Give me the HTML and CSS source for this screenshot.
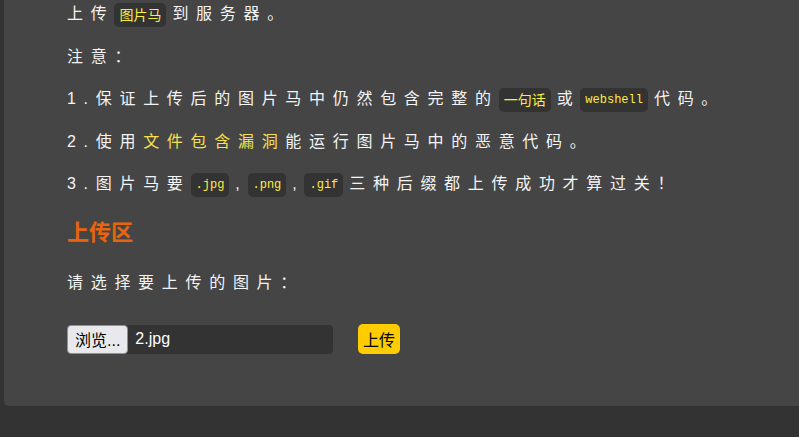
FILE: index.html
```html
<!DOCTYPE html>
<html lang="zh-CN">
  <head>
    <meta charset="UTF-8" />
    <meta name="viewport" content="width=device-width, initial-scale=1.0" />
    <title>Pass-14</title>
    <link rel="stylesheet" href="styles.css">
  </head>
  <body>
    <div class="panel">
      <p>上传<code class="cn">图片马</code>到服务器。</p>
      <p>注意：</p>
      <p>1.保证上传后的图片马中仍然包含完整的<code class="cn">一句话</code>或<code>webshell</code>代码。</p>
      <p>2.使用<span class="hl">文件包含漏洞</span>能运行图片马中的恶意代码。</p>
      <p>3.图片马要<code>.jpg</code>,<code>.png</code>,<code>.gif</code>三种后缀都上传成功才算过关！</p>

      <h2 class="section-title">上传区</h2>
      <p>请选择要上传的图片：</p>

      <form class="upload-form" onsubmit="return false">
        <label class="file-field">
          <span class="file-btn">浏览...</span>
          <span class="file-name">2.jpg</span>
        </label>
        <button class="upload-btn" type="submit">上传</button>
      </form>
    </div>
  </body>
</html>
```

FILE: styles.css
```css
* {
  box-sizing: border-box;
}
html,
body {
  overflow: hidden;
}
body {
  margin: 0;
  height: 437px;
  background-color: #333333;
  font-family: "Liberation Sans", "Noto Sans CJK SC", sans-serif;
  font-size: 16px;
  color: #f4f4f4;
}
.panel {
  margin-left: 4px;
  padding: 1px 0 52px 63px;
  background-color: #454545;
  border-bottom-left-radius: 5px;
}
.panel p {
  margin: 16px 0;
  height: 26.5px;
  line-height: 26.5px;
  letter-spacing: 7.7px;
}
.panel p:first-child {
  margin-top: 0;
}
code {
  display: inline-block;
  vertical-align: top;
  margin: 2px 6px 0 0;
  padding: 0 5px;
  line-height: 24px;
  font-family: "Liberation Mono", monospace;
  font-size: 12px;
  letter-spacing: 0;
  color: #ffec40;
  background-color: #333333;
  border-radius: 5px;
}
code.cn {
  font-family: "Noto Sans CJK SC", sans-serif;
  font-size: 14px;
  line-height: 22px;
  padding-bottom: 2px;
}
.hl {
  color: #f5e050;
}
.section-title {
  margin: 22px 0 24px;
  height: 26px;
  font-size: 22px;
  line-height: 26px;
  color: #e8650d;
}
.upload-form {
  display: flex;
  align-items: center;
  gap: 25px;
  margin-top: 28px;
}
.file-field {
  display: flex;
  align-items: center;
  gap: 7px;
  width: 266px;
  height: 29px;
  background-color: #333333;
  border-radius: 4px;
}
.file-btn {
  display: flex;
  align-items: center;
  height: 29px;
  padding: 0 7px;
  color: #000000;
  background-color: #e9e9ed;
  border: 1px solid #8f8f9d;
  border-radius: 4px;
}
.file-name {
  color: #ffffff;
}
.upload-btn {
  height: 30px;
  padding: 0 5px;
  font-family: inherit;
  font-size: 16px;
  color: #000000;
  background-color: #ffcc00;
  border: none;
  border-radius: 5px;
}
```
